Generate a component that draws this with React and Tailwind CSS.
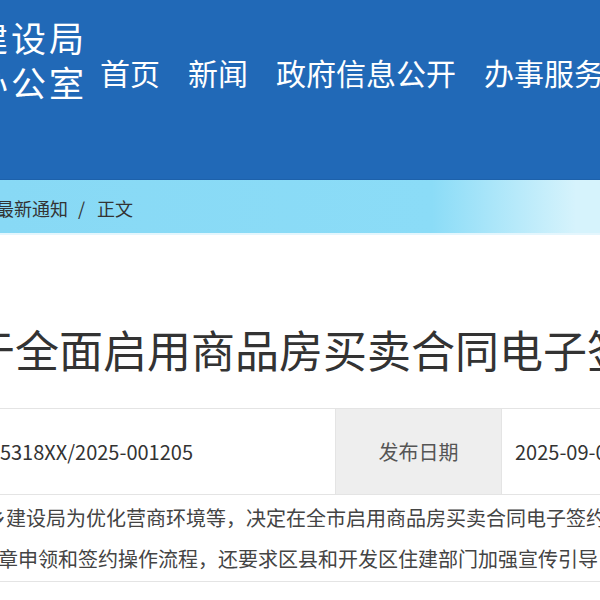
const NAV = ['首页', '新闻', '政府信息公开', '办事服务', '互动交流']

function Header() {
  return (
    <header className="h-[180px] bg-[#2169b7] border-b border-[#1d61ab] flex items-start">
      <div className="w-[87px] shrink-0 mt-[14px] flex flex-col items-end text-white text-[35px] leading-[45px] tracking-[3px] whitespace-nowrap">
        <span>住房和城乡建设局</span>
        <span>市人民政府办公室</span>
      </div>
      <nav className="ml-[13px] mt-[52px] flex gap-[28px] text-white text-[30px] leading-[40px] whitespace-nowrap">
        {NAV.map((item) => (
          <span key={item} className="shrink-0">{item}</span>
        ))}
      </nav>
    </header>
  )
}

function Crumbs() {
  return (
    <div className="h-[55px] pt-[3px] flex items-center border-b-2 border-[#e4f6fd] bg-[linear-gradient(90deg,#88d9f5_0%,#8bdcf7_72%,#d6f3fc_96%)] text-[18px] text-[#333] whitespace-nowrap">
      <div className="w-[68px] shrink-0 flex justify-end">
        <span>首页 / 通知公告 / 最新通知</span>
      </div>
      <span className="ml-[10px] mr-[12px]">/</span>
      <span>正文</span>
    </div>
  )
}

function InfoRow() {
  return (
    <div className="mt-[29px] h-[87px] flex border-y border-[#e4e4e4] text-[20px] whitespace-nowrap">
      <div className="w-[335px] shrink-0 flex items-center justify-end pr-[142px] text-[#333]">
        <span>11350200MB0W5318XX/2025-001205</span>
      </div>
      <div className="w-[167px] shrink-0 flex items-center justify-center bg-[#eeeeee] border-x border-[#e4e4e4] text-[#555]">
        发布日期
      </div>
      <div className="shrink-0 flex items-center pl-[13px] text-[#333]">2025-09-05</div>
    </div>
  )
}

export default function App() {
  return (
    <div className="w-[600px] h-[600px] overflow-hidden bg-white font-['Noto_Sans_CJK_SC',sans-serif]">
      <Header />
      <Crumbs />
      <h1 className="mt-[84px] -ml-[73px] text-[44px] leading-[60px] font-normal text-[#333] whitespace-nowrap">
        关于全面启用商品房买卖合同电子签约的通知
      </h1>
      <InfoRow />
      <div className="pt-[2px] pb-[2px] border-b border-[#e4e4e4] text-[20px] leading-[41px] text-[#444] whitespace-nowrap">
        <p className="-ml-[34px]">城乡建设局为优化营商环境等，决定在全市启用商品房买卖合同电子签约。</p>
        <p className="-ml-[22px]">签章申领和签约操作流程，还要求区县和开发区住建部门加强宣传引导，房地产开发企业</p>
      </div>
    </div>
  )
}
